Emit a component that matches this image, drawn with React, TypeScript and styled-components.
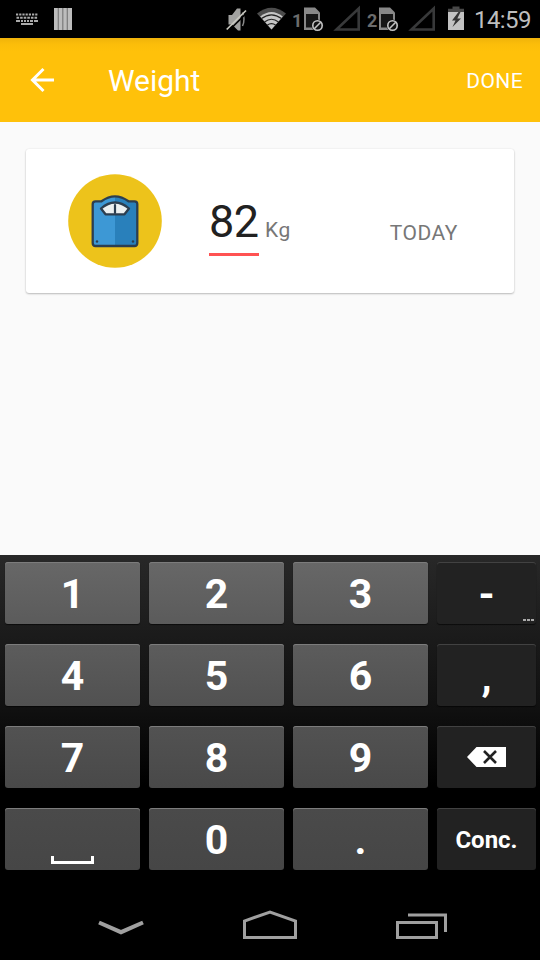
import React from "react";
import styled, { createGlobalStyle } from "styled-components";

const GlobalStyle = createGlobalStyle`
  * { box-sizing: border-box; }
  body { margin: 0; background: #000; }
`;

const Screen = styled.div`
  display: flex;
  flex-direction: column;
  width: 540px;
  height: 960px;
  overflow: hidden;
  background: #fafafa;
  font-family: Roboto, "Noto Sans", sans-serif;
`;

const StatusBar = styled.div`
  display: flex;
  height: 38px;
  flex: none;
  padding: 0 9px 0 16px;
  background: #000;
`;

const StatusIcon = styled.svg<{ $gap?: number }>`
  display: block;
  flex: none;
  margin-left: ${(p) => p.$gap ?? 0}px;
`;

const Spacer = styled.div`
  flex: 1;
`;

const SimNumber = styled.span<{ $gap: number }>`
  width: 11px;
  margin-left: ${(p) => p.$gap}px;
  color: #6c6c6c;
  font-size: 18px;
  font-weight: 700;
  line-height: 42px;
`;

const Clock = styled.span`
  width: 57px;
  margin-left: 10px;
  color: #bebebe;
  font-size: 24px;
  line-height: 40px;
  letter-spacing: -0.6px;
  white-space: nowrap;
`;

const AppBar = styled.header`
  display: flex;
  align-items: center;
  flex: none;
  height: 84px;
  padding: 0 17px 0 30px;
  color: #fff;
  background: linear-gradient(#f0b30a 0, #fbbd0a 6px, #ffc10a 14px);
`;

const Title = styled.h1`
  flex: 1;
  margin: 0 0 0 53px;
  padding-top: 2px;
  font-size: 30px;
  font-weight: 400;
  line-height: 36px;
  letter-spacing: -0.05px;
`;

const DoneButton = styled.button`
  padding: 1px 0 0;
  border: 0;
  color: inherit;
  background: none;
  font: 400 21px/24px Roboto, sans-serif;
  letter-spacing: 0.4px;
`;

const Content = styled.main`
  flex: 1;
  padding: 27px 26px 0;
`;

const Card = styled.section`
  display: flex;
  height: 144px;
  padding: 25px 0 0 42px;
  border-radius: 3px;
  background: #fff;
  box-shadow: 0 1px 2px rgba(0, 0, 0, 0.24), 0 0 2px rgba(0, 0, 0, 0.08);
`;

const WeightField = styled.div`
  width: 50px;
  height: 82px;
  margin-left: 47px;
  padding-top: 20px;
  border-bottom: 3px solid #ff5252;
  color: #212121;
  font-size: 45px;
  line-height: 56px;
  letter-spacing: -0.6px;
`;

const Caption = styled.span<{ $gap: number; $top: number }>`
  margin: ${(p) => p.$top}px 0 0 ${(p) => p.$gap}px;
  color: #777;
  font-size: 21px;
  line-height: 24px;
  letter-spacing: 0.5px;
`;

const Keyboard = styled.div`
  display: grid;
  grid-template-columns: 135px 135px 135px 99px;
  grid-auto-rows: 62px;
  gap: 20px 9px;
  flex: none;
  height: 333px;
  padding: 7px 0 0 5px;
  background: linear-gradient(#282828 0, #1b1b1b 80px, #101010 155px, #000 230px);
`;

const tones = [
  ["#676767", "#5b5b5b"],
  ["#5c5c5c", "#515151"],
  ["#525252", "#494949"],
  ["#4a4a4a", "#464646"],
];

const Key = styled.button<{ $row: number; $dark?: boolean; $small?: boolean; $drop?: number }>`
  position: relative;
  display: flex;
  align-items: center;
  justify-content: center;
  padding: ${(p) => 1 + (p.$drop ?? 0) * 2}px 0 0;
  border: 0;
  border-radius: 3px;
  color: #fff;
  background: ${(p) =>
    p.$dark ? "#222" : `linear-gradient(${tones[p.$row][0]}, ${tones[p.$row][1]})`};
  box-shadow: inset 0 1px 0 ${(p) => (p.$dark ? "#424242" : "#7c7c7c")},
    0 1px 1px rgba(0, 0, 0, 0.6);
  font: 700 ${(p) => (p.$small ? 24 : 41)}px/48px Roboto, sans-serif;
`;

const KeyDrawing = styled.svg<{ $drop?: number }>`
  display: block;
  margin-top: ${(p) => p.$drop ?? 0}px;
`;

const MoreDots = styled.span`
  position: absolute;
  right: 2px;
  bottom: 3px;
  display: flex;
  gap: 1px;
  i {
    width: 3px;
    height: 2px;
    background: #aaa;
  }
`;

const NavBar = styled.nav`
  display: flex;
  flex: none;
  height: 72px;
  padding-left: 98px;
  background: #000;
`;

const NavIcon = styled.svg<{ $gap?: number }>`
  flex: none;
  margin-left: ${(p) => p.$gap ?? 0}px;
  fill: none;
  stroke: #a0a0a0;
  stroke-width: 3;
`;

const SimIcon = ({ gap = 0 }: { gap?: number }) => (
  <StatusIcon $gap={gap} width="20" height="38" viewBox="0 0 20 38">
    <path d="M0 7.500h11l5 5v17.500H0z" fill="#888" />
    <path d="M2 14h12v13.500H2z" fill="#161616" />
    <circle cx="13.5" cy="25.5" r="6" fill="#111" />
    <circle cx="13.5" cy="25.5" r="4.700" fill="#111" stroke="#c4c4c4" strokeWidth="1.600" />
    <path d="M10.300 28.700l6.400-6.400" stroke="#c4c4c4" strokeWidth="1.600" />
  </StatusIcon>
);

const SignalIcon = ({ gap }: { gap: number }) => (
  <StatusIcon $gap={gap} width="28" height="38" viewBox="0 0 28 38">
    <path d="M3.500 29.500L25.700 8.500v21z" fill="none" stroke="#38393a" strokeWidth="2.600" />
  </StatusIcon>
);

const ScaleBadge = () => (
  <svg width="94" height="94" viewBox="0 0 94 94">
    <circle cx="47" cy="47" r="46.800" fill="#edc31b" />
    <path d="M27.500 27.300H33.500Q47 17.500 60.500 27.300H66.500Q69.300 27.300 69.300 30V69Q69.300 72 66.500 72H27.500Q24.700 72 24.700 69V30Q24.700 27.300 27.500 27.300z" fill="#3d98d5" />
    <path d="M47 22.300Q54 22.500 60.500 27.300H66.500Q69.300 27.300 69.300 30V69Q69.300 72 66.500 72H47z" fill="#2980bb" />
    <path d="M27.500 27.300H33.500Q47 17.500 60.500 27.300H66.500Q69.300 27.300 69.300 30V69Q69.300 72 66.500 72H27.500Q24.700 72 24.700 69V30Q24.700 27.300 27.500 27.300z" fill="none" stroke="#2c3e50" strokeWidth="2.300" />
    <path d="M33 34.500Q47 22.500 61 34.500L56.500 40.300H37.500z" fill="#ecf0f1" stroke="#2c3e50" strokeWidth="2.300" strokeLinejoin="round" />
    <path d="M47 31v8" stroke="#2c3e50" strokeWidth="2.200" strokeLinecap="round" />
    <circle cx="29" cy="67.500" r="1.200" fill="#2c3e50" />
    <circle cx="65" cy="67.500" r="1.200" fill="#2c3e50" />
  </svg>
);

export default function App() {
  return (
    <Screen>
      <GlobalStyle />
      <StatusBar>
        <StatusIcon width="22" height="38" viewBox="0 0 22 38">
          <g stroke="#aaa" strokeWidth="2" fill="none">
            <path d="M0 14.500h22" strokeDasharray="2.200 1" />
            <path d="M.5 17.800h21" strokeDasharray="2.600 1" />
            <path d="M0 21h22" strokeDasharray="4 1 2 1 2 1 2 1 3 1 4 9" />
            <path d="M5 24h12" />
          </g>
        </StatusIcon>
        <StatusIcon $gap={16} width="18" height="38" viewBox="0 0 18 38">
          <path d="M0 8h18v22H0z" fill="#bcbcbc" />
          <path d="M4.300 8v22M8.800 8v22M13.300 8v22" stroke="#797979" strokeWidth="1.200" />
        </StatusIcon>
        <Spacer />
        <StatusIcon width="21" height="38" viewBox="0 0 21 38">
          <path d="M2.500 15h3.500l5-6.500h3.500v22H12L6 24.500H2.500z" fill="#a2a2a0" />
          <path d="M16.500 12.500q3 7 0 13.500" stroke="#888" strokeWidth="1.500" fill="none" />
          <path d="M2.500 31L21 12.500" stroke="#000" strokeWidth="1.600" />
          <path d="M.7 29.500L20 10.500" stroke="#c8c8c0" strokeWidth="1.700" />
        </StatusIcon>
        <StatusIcon $gap={10} width="30" height="38" viewBox="0 0 30 38">
          <path d="M0 13.500Q14.500 2 29 13.500L14.500 29.500z" fill="#4c4c4c" />
          <path d="M3.200 16.500Q14.500 7.500 25.800 16.500L14.500 29.500z" fill="#c6c6c6" />
          <path d="M4.500 18.600Q14.500 11 24.500 18.600M7.500 22Q14.500 16.500 21.500 22M10.200 25.200Q14.500 22 18.800 25.200" fill="none" stroke="#222" strokeWidth="1.200" />
        </StatusIcon>
        <SimNumber $gap={5}>1</SimNumber>
        <SimIcon gap={1} />
        <SignalIcon gap={9} />
        <SimNumber $gap={6}>2</SimNumber>
        <SimIcon gap={1} />
        <SignalIcon gap={9} />
        <StatusIcon $gap={12} width="16" height="38" viewBox="0 0 16 38">
          <path d="M4.500 6.500h7v2.300H16v5H0v-5h4.500z" fill="#484848" />
          <path d="M0 12h16v18H0z" fill="#c2c2c2" />
          <path d="M10.500 12L4 20.500h3.500L4.500 27l8.500-8.500H9.300L12.500 12z" fill="#333" />
        </StatusIcon>
        <Clock>14:59</Clock>
      </StatusBar>

      <AppBar>
        <svg width="25" height="26" viewBox="0 0 25 26" fill="none" stroke="#fff" strokeWidth="3">
          <path d="M24 13H3M13.500 2L2.500 13l11 11" />
        </svg>
        <Title>Weight</Title>
        <DoneButton>DONE</DoneButton>
      </AppBar>

      <Content>
        <Card>
          <ScaleBadge />
          <WeightField>82</WeightField>
          <Caption $gap={6} $top={44}>Kg</Caption>
          <Caption $gap={99} $top={47}>TODAY</Caption>
        </Card>
      </Content>

      <Keyboard>
        <Key $row={0}>1</Key>
        <Key $row={0}>2</Key>
        <Key $row={0}>3</Key>
        <Key $row={0} $dark>
          -
          <MoreDots><i /><i /><i /></MoreDots>
        </Key>
        <Key $row={1}>4</Key>
        <Key $row={1}>5</Key>
        <Key $row={1}>6</Key>
        <Key $row={1} $dark $drop={1}>,</Key>
        <Key $row={2}>7</Key>
        <Key $row={2}>8</Key>
        <Key $row={2}>9</Key>
        <Key $row={2} $dark aria-label="Delete">
          <KeyDrawing $drop={-2} width="39" height="20" viewBox="0 0 39 20">
            <path d="M0 10L9.500 0H39v20H9.500z" fill="#fff" />
            <path d="M17 4l12 12M29 4L17 16" stroke="#222" strokeWidth="2.600" />
          </KeyDrawing>
        </Key>
        <Key $row={3} aria-label="Space">
          <KeyDrawing $drop={41} width="43" height="8" viewBox="0 0 43 8">
            <path d="M1.500 0v6.500h40V0" fill="none" stroke="#fff" strokeWidth="3" />
          </KeyDrawing>
        </Key>
        <Key $row={3}>0</Key>
        <Key $row={3}>.</Key>
        <Key $row={3} $dark $small>Conc.</Key>
      </Keyboard>

      <NavBar>
        <NavIcon width="46" height="72" viewBox="0 0 46 72">
          <path d="M1 34.500L23 44.200L45 34.500" strokeWidth="4" />
        </NavIcon>
        <NavIcon $gap={98} width="56" height="72" viewBox="0 0 56 72">
          <path d="M2.500 49.500V33L28 24L53.500 33V49.500z" />
        </NavIcon>
        <NavIcon $gap={98} width="52" height="72" viewBox="0 0 52 72">
          <path d="M1.500 34.500h39v15h-39zM12 27h37.500v17" />
        </NavIcon>
      </NavBar>
    </Screen>
  );
}
